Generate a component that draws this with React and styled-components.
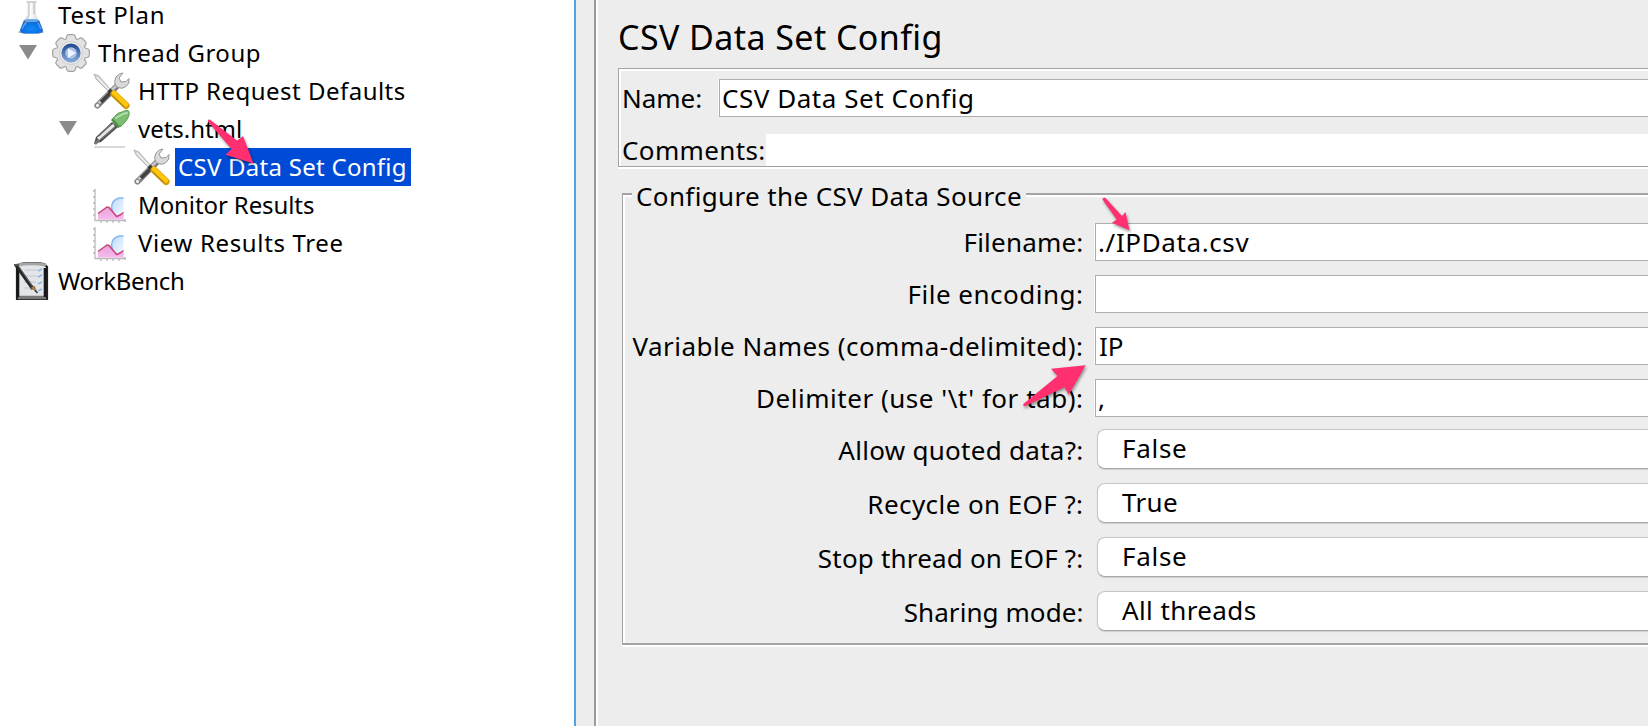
import React from 'react';
import styled, { createGlobalStyle } from 'styled-components';

const GlobalStyle = createGlobalStyle`
  body {
    margin: 0;
    overflow: hidden;
    background: #ededed;
    color: #000;
    font-family: "Noto Sans", "Open Sans", sans-serif;
  }
`;

const Window = styled.div`
  position: relative;
  display: flex;
  width: 1648px;
  height: 726px;
  overflow: hidden;
  background: #ededed;
`;

/* ---------- test plan tree ---------- */

const TreePane = styled.nav`
  box-sizing: border-box;
  flex: none;
  width: 576px;
  height: 726px;
  overflow: hidden;
  background: #fff;
  border-right: 2px solid #51a3e8;
`;

const Tree = styled.ul`
  list-style: none;
  margin: -4px 0 0;
  padding: 0;
`;

const TreeRow = styled.li`
  display: flex;
  align-items: center;
  height: 38px;
  padding-left: ${(p) => (p.$depth === 0 ? 0 : p.$depth * 40 - 21)}px;
`;

const Toggle = styled.span`
  flex: none;
  width: ${(p) => (p.$root ? 12 : 33)}px;
  height: 38px;

  svg {
    display: block;
    margin-top: 11px;
  }
`;

const IconSlot = styled.span`
  flex: none;
  width: 38px;
  height: 38px;

  svg {
    display: block;
  }
`;

const TreeLabel = styled.span`
  box-sizing: border-box;
  height: 38px;
  margin-left: 5px;
  padding: 0 4px 0 3px;
  font-size: 24px;
  line-height: 38px;
  letter-spacing: ${(p) => p.$track}px;
  white-space: pre;
  color: ${(p) => (p.$selected ? '#fff' : '#000')};
  background: ${(p) => (p.$selected ? '#004bd6' : 'transparent')};
`;

/* ---------- divider and editor ---------- */

const Divider = styled.div`
  flex: none;
  width: 18px;
  border-right: 2px solid #9a9a9a;
`;

const Editor = styled.main`
  box-sizing: border-box;
  flex: 1;
  min-width: 0;
  padding: 14px 0 0 20px;
  border-left: 2px solid #fff;
`;

const Title = styled.h1`
  margin: 0;
  font-size: 34px;
  font-weight: 400;
  line-height: 46px;
  letter-spacing: 0.42px;
`;

const NameGroup = styled.section`
  margin-top: 8px;
  padding: 10px 0 0 3px;
  border: solid #a3a3a3;
  border-width: 1px 0 1px 1px;
  box-shadow: inset 2px 2px 0 #fff, 0 2px 0 #fff;
`;

const NameRow = styled.div`
  display: flex;
  height: ${(p) => p.$height}px;
  margin-top: ${(p) => p.$gap || 0}px;
`;

const NameLabel = styled.label`
  flex: none;
  width: ${(p) => p.$width}px;
  font-size: 26px;
  line-height: ${(p) => p.$line}px;
  letter-spacing: ${(p) => p.$track}px;
  white-space: pre;
`;

const TextField = styled.div`
  box-sizing: border-box;
  flex: 1;
  height: 38px;
  padding-left: ${(p) => p.$pad ?? 2}px;
  font-size: 26px;
  line-height: 36px;
  letter-spacing: ${(p) => p.$track || 0}px;
  white-space: pre;
  background: #fff;
  border: solid #adadad;
  border-width: 1px 0 1px 1px;
  box-shadow: -1px 0 0 #fafafa;
`;

const PlainField = styled.div`
  flex: 1;
  background: #fff;
`;

const SourceGroup = styled.section`
  margin: 11px 0 0 4px;
`;

const GroupHeader = styled.header`
  display: flex;
  align-items: flex-end;
  height: 19px;
`;

const HeaderRule = styled.span`
  box-sizing: border-box;
  height: 4px;
  border-top: 2px solid #a3a3a3;
  border-left: ${(p) => (p.$lead ? '1px solid #a3a3a3' : '0')};
  background: #fff;
  flex: ${(p) => (p.$lead ? '0 0 10px' : '1')};
`;

const Legend = styled.h2`
  flex: none;
  align-self: flex-start;
  box-sizing: border-box;
  width: 394px;
  height: 19px;
  margin: 0;
  padding-left: 4px;
  font-size: 26px;
  font-weight: 400;
  line-height: 36px;
  letter-spacing: 0.37px;
  white-space: pre;
`;

const GroupBody = styled.div`
  padding: 26px 0 12px 2px;
  border-left: 1px solid #a3a3a3;
  border-bottom: 2px solid #a3a3a3;
  box-shadow: inset 2px 0 0 #fff, 0 2px 0 #fff;
`;

const FieldStack = styled.div`
  display: flex;
  flex-direction: column;
  gap: 14px;
  margin-top: ${(p) => p.$top || 0}px;
`;

const FieldRow = styled.div`
  display: flex;
`;

const FieldLabel = styled.label`
  box-sizing: border-box;
  flex: none;
  width: 458.5px;
  margin-right: 11.5px;
  padding-top: ${(p) => (p.$select ? 3 : 1)}px;
  font-size: 26px;
  line-height: 36px;
  letter-spacing: ${(p) => p.$track}px;
  text-align: right;
  white-space: pre;
`;

const Select = styled.div`
  box-sizing: border-box;
  flex: 1;
  height: 40px;
  margin-left: 2px;
  padding-left: 24px;
  font-size: 26px;
  line-height: 36px;
  letter-spacing: ${(p) => p.$track}px;
  background: #fff;
  border: 1px solid #c6c6c6;
  border-right: 0;
  border-bottom-color: #a8a8a8;
  border-radius: 8px 0 0 8px;
  box-shadow: 0 1px 1px #cfcfcf;
`;

const Markers = styled.svg`
  position: absolute;
  inset: 0;
  pointer-events: none;
  filter: drop-shadow(1px 2px 1.5px rgba(0, 0, 0, 0.4));
`;

/* ---------- icons ---------- */

const Icon = ({ children }) => (
  <svg width="38" height="38" viewBox="0 0 38 38" fill="none">{children}</svg>
);

const FlaskIcon = () => (
  <Icon>
    <defs>
      <linearGradient id="flaskGlass" x1="0" x2="1">
        <stop offset="0" stopColor="#c3c7cc" />
        <stop offset=".45" stopColor="#fff" />
        <stop offset="1" stopColor="#c8ccd2" />
      </linearGradient>
      <radialGradient id="flaskLiquid" cx=".5" cy=".65" r=".6">
        <stop offset="0" stopColor="#1687f5" />
        <stop offset=".6" stopColor="#0875e8" />
        <stop offset="1" stopColor="#2d65b5" />
      </radialGradient>
    </defs>
    <ellipse cx="19" cy="36" rx="13" ry="1.8" fill="#8b94a8" opacity=".75" />
    <path d="M15 6h9v12l6 16q0 3-3 3H11q-3 0-3-3l7-16z" fill="url(#flaskGlass)" />
    <path d="M12 24h15l4 10q0 3-5 3.5H12Q8 37 8 34z" fill="url(#flaskLiquid)" />
    <ellipse cx="19.500" cy="24.500" rx="7.500" ry="1.600" fill="#61a9ef" />
    <path d="M17 7v12l-4 10M22 7v11" stroke="#a4a9b0" strokeWidth="1.2" opacity=".7" />
    <path d="M14.500 6h10" stroke="#bfc3c8" strokeWidth="1.5" />
    <path d="M13 27l-3 6M26 27l3 6" stroke="#77b6f1" strokeWidth="1.5" opacity=".65" />
  </Icon>
);

const gearTeeth = Array.from({ length: 8 }, (_, i) => i * 45);

const GearIcon = () => (
  <Icon>
    <defs>
      <linearGradient id="gearRing" x1="0" y1="0" x2="0" y2="1">
        <stop offset="0" stopColor="#264f93" />
        <stop offset="1" stopColor="#7fa3d8" />
      </linearGradient>
    </defs>
    <g fill="#e2e2e2" stroke="#a2a2a2" strokeWidth="1.2">
      {gearTeeth.map((a) => (
        <path key={a} d="M13 8.500l1.500-5.500q.4-2.300 2-2.300h5q1.600 0 2 2.300l1.500 5.500z" transform={`rotate(${a} 19 19)`} />
      ))}
      <circle cx="19" cy="19" r="14.200" stroke="none" />
    </g>
    <circle cx="19" cy="19" r="11.500" fill="#e9e9e9" stroke="#cfcfcf" />
    <circle cx="19" cy="19" r="7.700" fill="#a9c2e6" stroke="url(#gearRing)" strokeWidth="3.800" />
    <path d="M16 14.500l8 4.500-8 5z" fill="#edf4ff" />
  </Icon>
);

const ToolsIcon = () => (
  <Icon>
    <path d="M2 2l5 2 12 14-2 2L4 7z" fill="#d3d3d3" stroke="#aaa" strokeWidth=".8" />
    <path d="M5 5l13 14" stroke="#efefef" strokeWidth="1.3" />
    <path d="M5.500 33.500L27 12" stroke="#777" strokeWidth="6" strokeLinecap="round" />
    <path d="M6 32L26 12" stroke="#c4c4c4" strokeWidth="3" strokeLinecap="round" />
    <path d="M9 30l9-9" stroke="#414141" strokeWidth="3.500" />
    <path d="M24 14q-3-4 0-9 3-4 7-4l-4 5 2 4 5-.5 3-3q1 5-3 8-4 3-8 1z" fill="#d9d9d9" stroke="#999" />
    <circle cx="5.500" cy="33.500" r="2.200" fill="#eee" stroke="#777" />
    <path d="M17 18l4 4" stroke="#393939" strokeWidth="4" />
    <path d="M22 22l12 11.500" stroke="#d49a09" strokeWidth="7" strokeLinecap="round" />
    <path d="M22 21l12 11.500" stroke="#ffc709" strokeWidth="4.500" strokeLinecap="round" />
    <path d="M21 24l11 11" stroke="#aa7f24" strokeWidth="1" />
  </Icon>
);

const PipetteIcon = () => (
  <Icon>
    <path d="M2 37h31" stroke="#bdbdbd" strokeWidth="1.6" opacity=".75" />
    <path d="M2 34l2-7L20 12l6 5L9 32z" fill="#4c4f4c" />
    <path d="M6 29L22 15" stroke="#e8e8e8" strokeWidth="3.200" />
    <path d="M9 29l14-12M7 26l12-12" stroke="#777" strokeWidth="1.2" />
    <path d="M3 34l4-4" stroke="#777" strokeWidth="2.500" />
    <path d="M19 10l3-3 8 9-4 2z" fill="#4a8e40" />
    <path d="M21 9q3-6 9-7 6-3 7-.5 1 4-2 8-3 5-7 7z" fill="#7dbd70" stroke="#5d9f51" />
    <path d="M24 8l7-4 4-1" stroke="#b1ddb0" strokeWidth="2" strokeLinecap="round" />
  </Icon>
);

const ChartIcon = () => (
  <Icon>
    <defs>
      <linearGradient id="chartBlue" x1="0" y1="0" x2="1" y2="1">
        <stop offset="0" stopColor="#bddafa" />
        <stop offset="1" stopColor="#f4faff" />
      </linearGradient>
      <linearGradient id="chartPink" x1="0" y1="0" x2="0" y2="1">
        <stop offset="0" stopColor="#e6a5d4" />
        <stop offset="1" stopColor="#f8b9f1" />
      </linearGradient>
    </defs>
    <path d="M31.500 12h-4.500q-7 2-7.500 9l1 7 7 3 4-3z" fill="url(#chartBlue)" />
    <path d="M31.500 12H27q-7 2-7.500 9l1 5" stroke="#85b8ef" strokeWidth="1.500" />
    <path d="M6 33.500V27.500L15 21l2 .5 7.700 9 7-3.500v6.500z" fill="url(#chartPink)" />
    <path d="M6 27.500L15 21l2 .5 7.700 9L28 29l3.500-2.500" stroke="#c8457f" strokeWidth="1.500" />
    <path d="M3 3v31.500h31M1 5h2M1 11h2M1 17h2M1 23h2M1 29h2M9 35v2M15 35v2M21 35v2M27 35v2M33 33v3" stroke="#b9b9b9" strokeWidth="1.300" />
  </Icon>
);

const NotebookIcon = () => (
  <Icon>
    <path d="M5 37V4l3-2q12-2 24 0l3 3v32z" fill="#e3e5e8" stroke="#202020" strokeWidth="2.200" />
    <path d="M6 35.500h28" stroke="#777" strokeWidth="3.500" />
    <path d="M5 3q14-2.500 29 0" stroke="#a5a5a5" strokeWidth="2.800" />
    <path d="M33 6v29M6 7v28" stroke="#171717" strokeWidth="2.600" />
    <path d="M13 8h12M13 14h12M12 20h12M12 26h12" stroke="#c1c7cf" />
    <path d="M26 9l4-2M26 15l4-2M26 22l4-2M26 29l4-2" stroke="#88b6e8" strokeWidth="1.700" />
    <path d="M4 3l17 24" stroke="#262626" strokeWidth="3.400" />
    <path d="M5 2l15 22" stroke="#66686a" strokeWidth="1" />
    <path d="M18.500 26l4-2.500 3 7.500z" fill="#a17b4d" />
    <path d="M23 28.500l2.500 2.500" stroke="#333" strokeWidth="1.500" />
    <path d="M2 3h5" stroke="#555" strokeWidth="2" />
  </Icon>
);

const ExpandedArrow = () => (
  <svg width="18" height="15" viewBox="0 0 18 15">
    <path d="M0 0h18L9 14.500z" fill="#8b8b8b" />
  </svg>
);

/* ---------- data ---------- */

const nodes = [
  { label: 'Test Plan', depth: 0, icon: FlaskIcon, track: 0.74 },
  { label: 'Thread Group', depth: 1, icon: GearIcon, track: 0.54, open: true },
  { label: 'HTTP Request Defaults', depth: 2, icon: ToolsIcon, track: 0.48 },
  { label: 'vets.html', depth: 2, icon: PipetteIcon, track: -0.03, open: true },
  { label: 'CSV Data Set Config', depth: 3, icon: ToolsIcon, track: 0.27, selected: true },
  { label: 'Monitor Results', depth: 2, icon: ChartIcon, track: -0.1 },
  { label: 'View Results Tree', depth: 2, icon: ChartIcon, track: 0.64 },
  { label: 'WorkBench', depth: 0, icon: NotebookIcon, track: -0.32 },
];

const textFields = [
  { label: 'Filename:', track: 0.2, value: './IPData.csv', valueTrack: 0.62 },
  { label: 'File encoding:', track: 0.5, value: '' },
  { label: 'Variable Names (comma-delimited):', track: 0.46, value: 'IP', pad: 3 },
  { label: "Delimiter (use '\\t' for tab):", track: 0.52, value: ',' },
];

const selects = [
  { label: 'Allow quoted data?:', track: 0.28, value: 'False', valueTrack: 0.7 },
  { label: 'Recycle on EOF ?:', track: 0.42, value: 'True', valueTrack: 0.35 },
  { label: 'Stop thread on EOF ?:', track: 0.19, value: 'False', valueTrack: 0.7 },
  { label: 'Sharing mode:', track: 0.07, value: 'All threads', valueTrack: 0.4 },
];

export default function App() {
  return (
    <>
      <GlobalStyle />
      <Window>
        <TreePane>
          <Tree>
            {nodes.map(({ label, depth, icon: NodeIcon, track, open, selected }) => (
              <TreeRow key={label} $depth={depth}>
                <Toggle $root={depth === 0}>{open && <ExpandedArrow />}</Toggle>
                <IconSlot><NodeIcon /></IconSlot>
                <TreeLabel $track={track} $selected={selected}>{label}</TreeLabel>
              </TreeRow>
            ))}
          </Tree>
        </TreePane>
        <Divider />
        <Editor>
          <Title>CSV Data Set Config</Title>
          <NameGroup>
            <NameRow $height={38}>
              <NameLabel $width={97} $line={38} $track={-0.03}>Name:</NameLabel>
              <TextField $track={0.54}>CSV Data Set Config</TextField>
            </NameRow>
            <NameRow $height={32} $gap={17}>
              <NameLabel $width={144} $line={32} $track={0.36}>Comments:</NameLabel>
              <PlainField />
            </NameRow>
          </NameGroup>
          <SourceGroup>
            <GroupHeader>
              <HeaderRule $lead />
              <Legend>Configure the CSV Data Source</Legend>
              <HeaderRule />
            </GroupHeader>
            <GroupBody>
              <FieldStack>
                {textFields.map((f) => (
                  <FieldRow key={f.label}>
                    <FieldLabel $track={f.track}>{f.label}</FieldLabel>
                    <TextField $track={f.valueTrack} $pad={f.pad}>{f.value}</TextField>
                  </FieldRow>
                ))}
              </FieldStack>
              <FieldStack $top={12}>
                {selects.map((f) => (
                  <FieldRow key={f.label}>
                    <FieldLabel $select $track={f.track}>{f.label}</FieldLabel>
                    <Select $track={f.valueTrack}>{f.value}</Select>
                  </FieldRow>
                ))}
              </FieldStack>
            </GroupBody>
          </SourceGroup>
        </Editor>
        <Markers width="1648" height="726" viewBox="0 0 1648 726" fill="#ff2f70">
          <path d="M208 121.500Q207.500 119 210 119.700L237 140.500 243 136 253.500 163.500 225.500 154.700 231.500 149Z" />
          <path d="M1102.500 199.500Q1102.500 197 1105.500 198L1122 216 1125.500 212 1129.500 230.300 1112 222.700 1116.700 219.500Z" />
          <path d="M1023.300 404L1057.500 376 1051 368.700 1085.700 365.200 1068.700 394.700 1064.500 387.300 1025.500 406Q1023 407 1023.300 404Z" />
        </Markers>
      </Window>
    </>
  );
}
